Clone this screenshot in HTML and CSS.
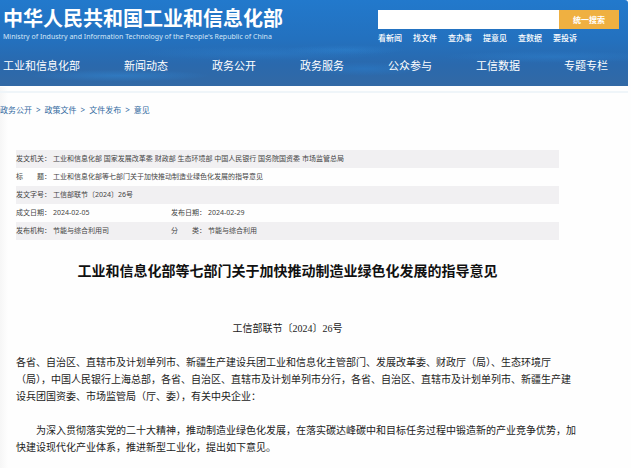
FILE: index.html
```
<!DOCTYPE html>
<html lang="zh-CN">
  <head>
    <meta charset="UTF-8" />
    <meta name="viewport" content="width=device-width, initial-scale=1.0" />
    <title>工业和信息化部等七部门关于加快推动制造业绿色化发展的指导意见</title>
    <link rel="stylesheet" href="styles.css">
  </head>
  <body>
    <header class="header">
      <div class="top">
        <div class="logo">
          <p class="logo-cn">中华人民共和国工业和信息化部</p>
          <p class="logo-en">Ministry of Industry and Information Technology of the People's Republic of China</p>
        </div>
        <div class="search">
          <form class="search-form">
            <input class="search-input" type="text" aria-label="搜索" />
            <button class="search-button" type="button">统一搜索</button>
          </form>
          <div class="quick-links">
            <a href="#">看新闻</a>
            <a href="#">找文件</a>
            <a href="#">查办事</a>
            <a href="#">提意见</a>
            <a href="#">查数据</a>
            <a href="#">要投诉</a>
          </div>
        </div>
      </div>
      <nav class="nav">
        <a href="#">工业和信息化部</a>
        <a href="#">新闻动态</a>
        <a href="#">政务公开</a>
        <a href="#">政务服务</a>
        <a href="#">公众参与</a>
        <a href="#">工信数据</a>
        <a href="#">专题专栏</a>
      </nav>
    </header>

    <main class="main">
      <div class="breadcrumb">
        <a href="#">政务公开</a>
        <span>&gt;</span>
        <a href="#">政策文件</a>
        <span>&gt;</span>
        <a href="#">文件发布</a>
        <span>&gt;</span>
        <a href="#">意见</a>
      </div>

      <table class="info">
        <colgroup>
          <col class="col-label" />
          <col class="col-value" />
          <col class="col-label" />
          <col />
        </colgroup>
        <tbody>
          <tr>
            <th>发文机关：</th>
            <td colspan="3">工业和信息化部 国家发展改革委 财政部 生态环境部 中国人民银行 国务院国资委 市场监管总局</td>
          </tr>
          <tr>
            <th>标　　题：</th>
            <td colspan="3">工业和信息化部等七部门关于加快推动制造业绿色化发展的指导意见</td>
          </tr>
          <tr>
            <th>发文字号：</th>
            <td colspan="3">工信部联节〔2024〕26号</td>
          </tr>
          <tr>
            <th>成文日期：</th>
            <td>2024-02-05</td>
            <th>发布日期：</th>
            <td>2024-02-29</td>
          </tr>
          <tr>
            <th>发布机构：</th>
            <td>节能与综合利用司</td>
            <th>分　　类：</th>
            <td>节能与综合利用</td>
          </tr>
        </tbody>
      </table>

      <article class="article">
        <h1 class="title">工业和信息化部等七部门关于加快推动制造业绿色化发展的指导意见</h1>
        <p class="number">工信部联节〔2024〕26号</p>
        <p>各省、自治区、直辖市及计划单列市、新疆生产建设兵团工业和信息化主管部门、发展改革委、财政厅（局）、生态环境厅（局），中国人民银行上海总部，各省、自治区、直辖市及计划单列市分行，各省、自治区、直辖市及计划单列市、新疆生产建设兵团国资委、市场监管局（厅、委），有关中央企业：</p>
        <p class="indent">为深入贯彻落实党的二十大精神，推动制造业绿色化发展，在落实碳达峰碳中和目标任务过程中锻造新的产业竞争优势，加快建设现代化产业体系，推进新型工业化，提出如下意见。</p>
      </article>
    </main>
  </body>
</html>
```

FILE: styles.css
```
* {
  box-sizing: border-box;
}
body {
  font-family: "Noto Sans", "Noto Sans CJK SC", sans-serif;
  margin: 0;
  color: #222;
  background-color: #fefefe;
}
p,
h1 {
  margin: 0;
}
a {
  color: inherit;
  text-decoration: none;
}

/* Topo azul */
.header {
  height: 86px;
  margin-right: 3px;
  padding: 10px 9px 0 3px;
  color: white;
  border-top-right-radius: 3px;
  background:
    radial-gradient(ellipse 90px 6px at 19% 88%, rgba(50, 145, 225, 0.4), transparent),
    radial-gradient(ellipse 130px 7px at 42% 62%, rgba(50, 140, 220, 0.25), transparent),
    radial-gradient(ellipse 60px 5px at 55% 58%, rgba(50, 145, 225, 0.3), transparent),
    radial-gradient(ellipse 60px 7px at 58% 80%, rgba(40, 135, 220, 0.35), transparent),
    radial-gradient(ellipse 110px 6px at 88% 66%, rgba(50, 140, 220, 0.3), transparent),
    linear-gradient(#2279cc, #2371bf 45%, #2a69ad 75%, #3269a5);
}
.top {
  display: flex;
  justify-content: space-between;
  height: 45px;
}
.logo {
  white-space: nowrap;
}
.logo-cn {
  font-family: "Liberation Sans", "Noto Sans CJK SC", sans-serif;
  font-size: 20px;
  font-weight: bold;
  line-height: 18px;
}
.logo-en {
  margin-top: 4px;
  font-size: 7px;
  line-height: 10px;
  color: #d3e6f7;
}
.search {
  width: 241px;
}
.search-form {
  display: flex;
  height: 19px;
}
.search-input {
  flex: 1;
  min-width: 0;
  padding: 0 6px;
  border: none;
  background-color: white;
}
.search-button {
  width: 60px;
  padding: 0;
  border: none;
  font-family: inherit;
  font-size: 8px;
  font-weight: bold;
  color: white;
  background-color: #efb041;
}
.quick-links {
  display: flex;
  gap: 11px;
  margin-top: 3px;
  font-size: 8px;
  font-weight: 500;
  line-height: 12px;
}
.nav {
  display: flex;
  gap: 44px;
  font-size: 11px;
  line-height: 22px;
  white-space: nowrap;
}

/* Conteudo */
.main {
  border-top: 1px solid #fefefe;
  background: linear-gradient(90deg, #f6f6f6, #fefefe 8px);
}
.main::before {
  content: "";
  display: block;
  height: 2px;
  margin: 4px 3px 0 0;
  background-color: #eff5f9;
}
.breadcrumb {
  display: flex;
  gap: 4px;
  margin-top: 11px;
  font-size: 8px;
  line-height: 12px;
  color: #336a9f;
}
.info {
  width: calc(100% - 88px);
  margin: 34px 72px 0 16px;
  border-collapse: collapse;
  table-layout: fixed;
  font-size: 7px;
  line-height: 18px;
  color: #444;
}
.info th,
.info td {
  height: 18px;
  padding: 0;
  font-weight: normal;
  text-align: left;
  white-space: nowrap;
}
.info tr:nth-child(odd) {
  background-color: #f1f0f2;
}
.col-label {
  width: 37px;
}
.col-value {
  width: 118px;
}
.article {
  padding: 20px 55px 10px 16px;
  font-family: "Liberation Serif", "Noto Sans CJK SC", serif;
  font-size: 10px;
  line-height: 17px;
}
.article p {
  margin-bottom: 17px;
}
.article .title {
  margin-right: 17px;
  font-family: "Noto Sans CJK SC", sans-serif;
  font-size: 14px;
  line-height: 20px;
  text-align: center;
  color: #111;
}
.article .number {
  margin: 40px 17px 17px 0;
  text-align: center;
}
.indent {
  text-indent: 2em;
}
```
